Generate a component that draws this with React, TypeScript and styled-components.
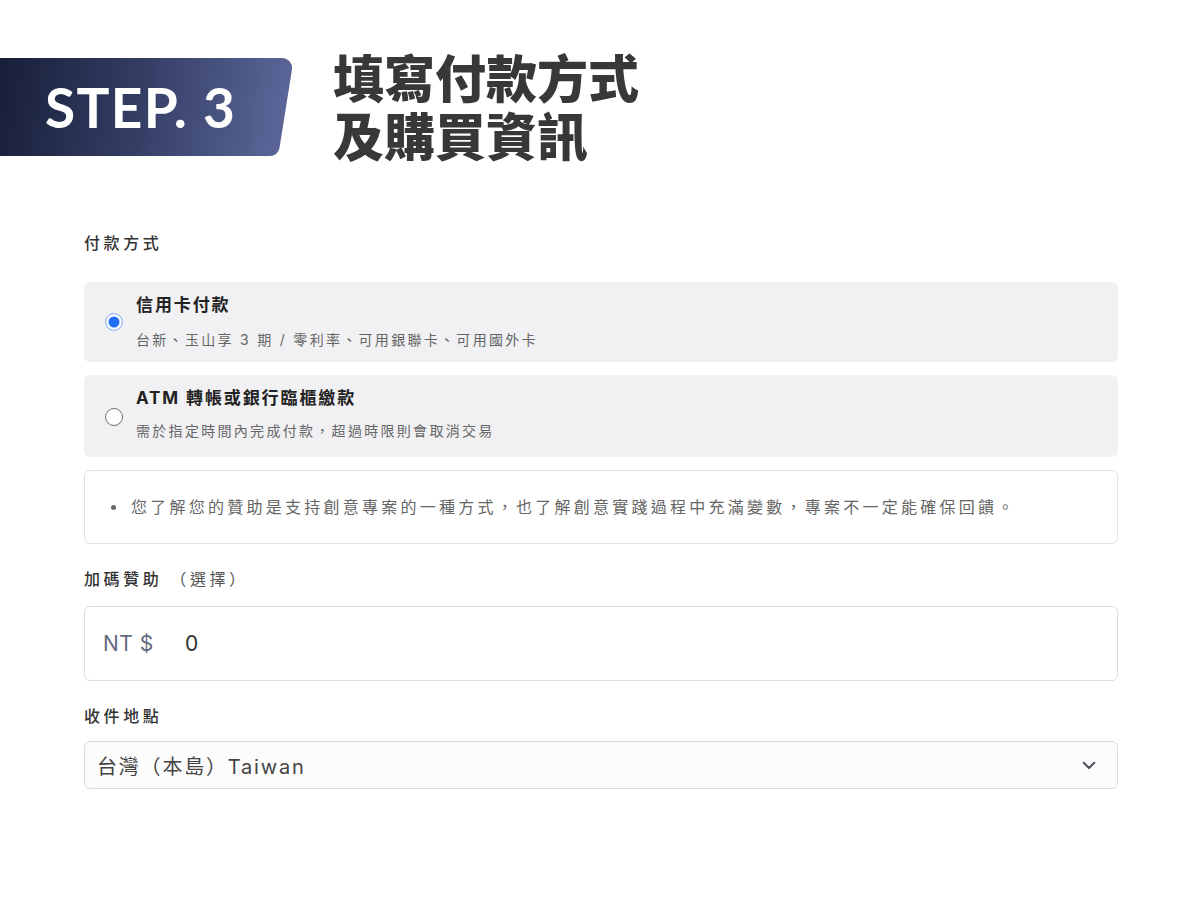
import React from 'react'
import styled, { createGlobalStyle } from 'styled-components'

const GlobalStyle = createGlobalStyle`
  body {
    margin: 0;
    background: #fff;
    font-family: "Inter", "Noto Sans CJK TC", sans-serif;
    color: #333;
  }
`

const Page = styled.div`
  width: 1200px;
  min-height: 900px;
`

const Header = styled.header`
  display: flex;
  align-items: flex-start;
  padding-top: 47px;
`

const StepBadge = styled.div`
  position: relative;
  z-index: 0;
  margin-top: 11px;
  width: 293px;
  height: 98px;
  box-sizing: border-box;
  display: flex;
  align-items: center;
  padding-left: 45px;
  color: #fff;
  font-family: "Lato", "Inter", sans-serif;
  font-weight: 700;
  font-size: 55px;
  letter-spacing: 1.3px;

  &::before {
    content: '';
    position: absolute;
    z-index: -1;
    top: 0;
    bottom: 0;
    left: -30px;
    right: 7px;
    background: linear-gradient(90deg, #131a32 0%, #353f66 55%, #5b6598 100%);
    border-radius: 0 12px 8px 0;
    transform: skewX(-9deg);
  }
`

const Title = styled.h1`
  margin: 0 0 0 40px;
  font-family: "Noto Sans CJK TC", sans-serif;
  font-weight: 900;
  font-size: 51px;
  line-height: 58px;
  color: #383838;
`

const TitleLine = styled.span`
  display: block;
`

const Form = styled.form`
  margin: 70px 0 0 84px;
  width: 1034px;
  display: flex;
  flex-direction: column;
`

const Label = styled.div<{ $mt?: number; $mb: number }>`
  margin-top: ${p => p.$mt ?? 0}px;
  margin-bottom: ${p => p.$mb}px;
  font-size: 16px;
  line-height: 20px;
  letter-spacing: 3.6px;
  font-weight: 500;
  color: #333;
`

const Optional = styled.span`
  color: #555;
  font-weight: 400;
`

const OptionList = styled.div`
  display: flex;
  flex-direction: column;
  gap: 13px;
`

const Option = styled.label<{ $h: number; $gap: number }>`
  display: flex;
  align-items: flex-start;
  gap: 13px;
  height: ${p => p.$h}px;
  box-sizing: border-box;
  padding: 12px 0 0 21px;
  background: #f1f1f3;
  border-radius: 6px;

  & > div {
    gap: ${p => p.$gap}px;
  }
`

const Radio = styled.span<{ $on?: boolean }>`
  flex: none;
  align-self: center;
  width: 18px;
  height: 18px;
  box-sizing: border-box;
  border-radius: 50%;
  margin-top: ${p => (p.$on ? -12 : -11)}px;
  background: ${p => (p.$on ? '#1f6ef5' : '#fff')};
  border: ${p => (p.$on ? '1px solid #a7c3f5' : '1px solid #6f6f6f')};
  box-shadow: ${p => (p.$on ? 'inset 0 0 0 2.5px #fff' : 'none')};
`

const OptionText = styled.div`
  display: flex;
  flex-direction: column;
`

const OptionTitle = styled.div`
  font-size: 17px;
  line-height: 22px;
  font-weight: 700;
  letter-spacing: 1.9px;
  color: #222;
`

const OptionDesc = styled.div`
  font-size: 14px;
  line-height: 18px;
  letter-spacing: 2.3px;
  color: #666;
`

const Notice = styled.ul`
  margin: 13px 0 0;
  height: 74px;
  box-sizing: border-box;
  padding: 0 0 0 26px;
  list-style: none;
  display: flex;
  flex-direction: column;
  justify-content: center;
  border: 1px solid #dde0ec;
  border-radius: 6px;
  font-size: 16px;
  line-height: 22px;
  letter-spacing: 3.25px;
  color: #666;
`

const NoticeItem = styled.li`
  display: flex;
  align-items: center;
  gap: 15px;

  &::before {
    content: '';
    flex: none;
    width: 5px;
    height: 5px;
    border-radius: 50%;
    background: #666;
  }
`

const Field = styled.div<{ $h: number; $bg?: string }>`
  display: flex;
  align-items: center;
  height: ${p => p.$h}px;
  box-sizing: border-box;
  border: 1px solid #dcdcdc;
  border-radius: 6px;
  background: ${p => p.$bg ?? '#fff'};
`

const Prefix = styled.span`
  margin-left: 18px;
  width: 82px;
  font-size: 21px;
  letter-spacing: 0.5px;
  color: #626a7e;
`

const Amount = styled.span`
  font-size: 21px;
  color: #333;
`

const SelectValue = styled.span`
  flex: 1;
  margin-left: 12px;
  font-size: 20px;
  letter-spacing: 1.8px;
  color: #444;
`

const Chevron = styled.svg`
  margin-right: 19px;
`

export default function App() {
  return (
    <Page lang="zh-Hant-TW">
      <GlobalStyle />
      <Header>
        <StepBadge>STEP. 3</StepBadge>
        <Title>
          <TitleLine>填寫付款方式</TitleLine>
          <TitleLine>及購買資訊</TitleLine>
        </Title>
      </Header>

      <Form>
        <Label $mb={29}>付款方式</Label>
        <OptionList>
          <Option $h={80} $gap={15}>
            <Radio $on />
            <OptionText>
              <OptionTitle>信用卡付款</OptionTitle>
              <OptionDesc>台新、玉山享 3 期 / 零利率、可用銀聯卡、可用國外卡</OptionDesc>
            </OptionText>
          </Option>
          <Option $h={82} $gap={13}>
            <Radio />
            <OptionText>
              <OptionTitle>ATM 轉帳或銀行臨櫃繳款</OptionTitle>
              <OptionDesc>需於指定時間內完成付款，超過時限則會取消交易</OptionDesc>
            </OptionText>
          </Option>
        </OptionList>

        <Notice>
          <NoticeItem>您了解您的贊助是支持創意專案的一種方式，也了解創意實踐過程中充滿變數，專案不一定能確保回饋。</NoticeItem>
        </Notice>

        <Label $mt={25} $mb={17}>
          加碼贊助 <Optional>（選擇）</Optional>
        </Label>
        <Field $h={75}>
          <Prefix>NT $</Prefix>
          <Amount>0</Amount>
        </Field>

        <Label $mt={25} $mb={15}>收件地點</Label>
        <Field $h={48} $bg="#fcfcfc">
          <SelectValue>台灣（本島）Taiwan</SelectValue>
          <Chevron width="18" height="18" viewBox="0 0 24 24" fill="none" stroke="#4a4f5c" strokeWidth="2.6" strokeLinecap="round" strokeLinejoin="round">
            <path d="M5 9l7 7 7-7" />
          </Chevron>
        </Field>
      </Form>
    </Page>
  )
}
